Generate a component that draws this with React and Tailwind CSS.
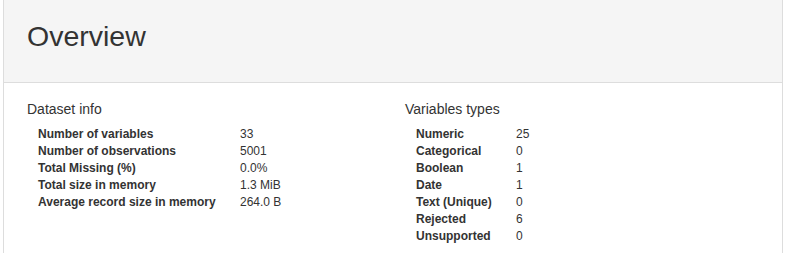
const datasetInfo = [
  ['Number of variables', '33'],
  ['Number of observations', '5001'],
  ['Total Missing (%)', '0.0%'],
  ['Total size in memory', '1.3 MiB'],
  ['Average record size in memory', '264.0 B'],
];

const variableTypes = [
  ['Numeric', '25'],
  ['Categorical', '0'],
  ['Boolean', '1'],
  ['Date', '1'],
  ['Text (Unique)', '0'],
  ['Rejected', '6'],
  ['Unsupported', '0'],
];

const InfoTable = ({ title, rows, labelWidth }) => (
  <div>
    <h4 className="text-[14px] leading-[20px] text-[#333]">{title}</h4>
    <table className="mt-[7px] ml-[11px] text-[12px] leading-[17px] text-[#333]">
      <tbody>
        {rows.map(([label, value]) => (
          <tr key={label}>
            <th className={`text-left font-bold p-0 ${labelWidth}`}>{label}</th>
            <td className="p-0">{value}</td>
          </tr>
        ))}
      </tbody>
    </table>
  </div>
);

export default function App() {
  return (
    <div className="h-[253px] bg-white font-['Liberation_Sans',Arial,sans-serif]">
      <div className="ml-[3px] w-[780px] h-full border-x border-[#ddd]">
        {/* Heading */}
        <div className="h-[83px] bg-[#f5f5f5] border-b border-[#ddd] pl-[23px] pt-[19px]">
          <h1 className="text-[28.5px] leading-[34px] text-[#333]">Overview</h1>
        </div>

        {/* Body */}
        <div className="flex pl-[23px] pt-[16px]">
          <div className="w-[378px]">
            <InfoTable title="Dataset info" rows={datasetInfo} labelWidth="w-[202px]" />
          </div>
          <InfoTable title="Variables types" rows={variableTypes} labelWidth="w-[100px]" />
        </div>
      </div>
    </div>
  );
}
